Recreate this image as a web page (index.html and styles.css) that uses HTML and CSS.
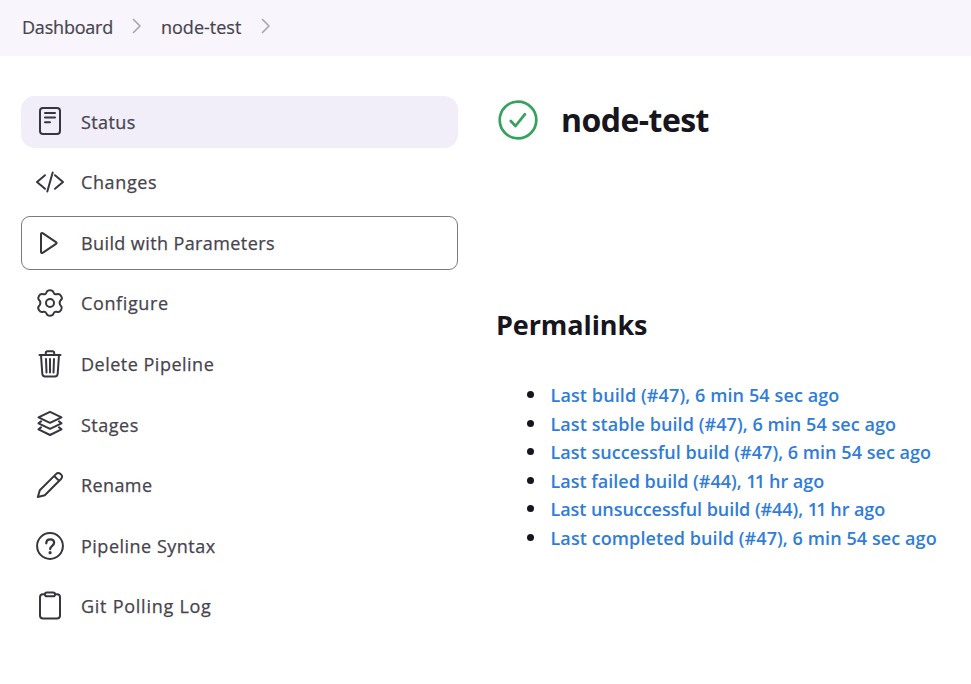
FILE: index.html
```html
<!DOCTYPE html>
<html lang="en">
<head>
<meta charset="utf-8">
<title>node-test</title>
<link rel="stylesheet" href="styles.css">
</head>
<body>
<nav class="breadcrumbs">
  <a class="crumb crumb-home">Dashboard</a>
  <svg class="chevron" viewBox="0 0 10 16"><path d="M1.500 1.500 8 8l-6.500 6.500"/></svg>
  <a class="crumb crumb-job">node-test</a>
  <svg class="chevron" viewBox="0 0 10 16"><path d="M1.500 1.500 8 8l-6.500 6.500"/></svg>
</nav>
<div class="page">
  <aside class="tasks">
    <a class="task active"><svg class="icon" viewBox="0 0 28 28"><rect x="4" y="0" width="20" height="26" rx="3"/><path d="M9 5h10M9 9.500h10M9 14.300h5"/></svg><span class="t-status">Status</span></a>
    <a class="task nudge"><svg class="icon" viewBox="0 0 28 28"><path d="M9 7.200 1 14 9 20.800M19 7.200l8 6.800-8 6.800M16.700 4.500l-5.400 19"/></svg><span class="t-changes">Changes</span></a>
    <a class="task focused"><svg class="icon" viewBox="0 0 28 28"><path d="M5 5v18c0 1 .8 1.300 1.600.8l13.400-8.900c.8-.5.8-1.300 0-1.800L6.600 4.200C5.800 3.700 5 4 5 5z"/></svg><span class="t-build">Build with Parameters</span></a>
    <a class="task nudge"><svg class="icon" viewBox="0 0 28 28"><path d="M10.600 3.300Q11.200 1.300 14 1.300T17.400 3.300Q18.200 5.800 20.600 5.200Q23.300 4.200 24.900 6.700T25.500 10.300Q23.600 12.200 23.600 14T25.500 17.700Q26.300 18.900 24.900 21.300T20.600 22.800Q18.200 22.200 17.400 24.700Q16.800 26.700 14 26.700T10.600 24.700Q9.800 22.200 7.400 22.800Q4.700 23.800 3.100 21.300T2.500 17.700Q4.400 15.800 4.400 14T2.500 10.300Q1.700 9.100 3.100 6.700T7.400 5.200Q9.800 5.800 10.600 3.300Z"/><circle cx="14" cy="14" r="4"/></svg><span class="t-configure">Configure</span></a>
    <a class="task"><svg class="icon" viewBox="0 0 28 28"><path d="M3.500 5h21M5 5l1.300 18.800Q6.500 26.500 9 26.500h10q2.500 0 2.700-2.700L23 5M9.800 5V3q0-1.800 1.800-1.800h4.800Q18.200 1.200 18.200 3v2M10 9l.5 13.500M14 9v13.500M18 9l-.5 13.500"/></svg><span class="t-delete">Delete Pipeline</span></a>
    <a class="task"><svg class="icon" viewBox="0 0 28 28"><path d="M14 .8 25.500 6.300 14 11.800 2.500 6.300zM5 10.400 2.500 12.300 14 17.800 25.500 12.300 23 10.400M5 16.400 2.500 18.300 14 24 25.500 18.300 23 16.400"/></svg><span class="t-stages">Stages</span></a>
    <a class="task"><svg class="icon" viewBox="0 0 28 28"><path d="M1.800 26 3.800 19.300 20 3.100Q22.200.9 24.800 3.200T25 8L8.800 24.200zM18.200 5l4.900 4.900"/></svg><span class="t-rename">Rename</span></a>
    <a class="task"><svg class="icon" viewBox="0 0 28 28"><circle cx="14" cy="14" r="12.900"/><path class="query" d="M10.300 11.300c0-2.600 1.600-4 3.900-4s3.900 1.400 3.900 3.500c0 3-3.900 3.100-3.900 6.200"/><circle class="dot" cx="14.100" cy="20.700" r="1.600"/></svg><span class="t-syntax">Pipeline Syntax</span></a>
    <a class="task"><svg class="icon" viewBox="0 0 28 28"><path d="M9 2.200H7Q4 2.200 4 5.200v18.300Q4 26.500 7 26.500h14q3 0 3-3V5.200q0-3-3-3h-2"/><rect x="9" y=".4" width="10" height="3.800" rx="1.800"/></svg><span class="t-log">Git Polling Log</span></a>
  </aside>
  <main class="content">
    <header class="job">
      <svg class="success" viewBox="0 0 40 40"><circle cx="20" cy="20" r="18.300"/><path d="m12.800 21 4.700 5 9.500-11.800"/></svg>
      <h1>node-test</h1>
    </header>
    <h2>Permalinks</h2>
    <ul class="permalinks">
      <li><a class="l1">Last build (#47), 6 min 54 sec ago</a></li>
      <li><a class="l2">Last stable build (#47), 6 min 54 sec ago</a></li>
      <li><a class="l3">Last successful build (#47), 6 min 54 sec ago</a></li>
      <li><a class="l4">Last failed build (#44), <span class="hours">11</span> hr ago</a></li>
      <li><a class="l5">Last unsuccessful build (#44), <span class="hours">11</span> hr ago</a></li>
      <li><a class="l6">Last completed build (#47), 6 min 54 sec ago</a></li>
    </ul>
  </main>
</div>
</body>
</html>
```
FILE: styles.css
```css
* { box-sizing: border-box; }
body {
  margin: 0;
  background: #fff;
  color: #47444e;
  font-family: "Open Sans", "Noto Sans", sans-serif;
}
svg { flex: none; overflow: visible; fill: none; stroke-linecap: round; stroke-linejoin: round; }
.breadcrumbs {
  display: flex;
  align-items: center;
  height: 56px;
  padding: 0 0 2px 22px;
  background: #f8f5fc;
  font-size: 18px;
  line-height: 24px;
  -webkit-text-stroke: .2px;
}
.crumb-home { width: 110px; letter-spacing: -.2px; }
.crumb-job { width: 81px; margin: 0 19px; }
.crumb { white-space: nowrap; }
.chevron { width: 10px; height: 16px; margin-top: -2px; stroke: #aaa7b1; stroke-width: 1.700; }
.page { display: flex; padding: 40px 0 0 21px; }
.tasks { display: flex; flex-direction: column; gap: 8.500px; width: 437px; }
.task {
  display: flex;
  align-items: center;
  gap: 17px;
  height: 52px;
  padding-left: 15px;
  border-radius: 14px;
  font-size: 18px;
  line-height: 24px;
  font-weight: 500;
  letter-spacing: .4px;
  white-space: nowrap;
  -webkit-text-stroke: .25px;
}
.nudge { margin: -.300px 0 .300px; }
.t-changes, .t-configure { letter-spacing: .62px; }
.t-delete, .t-stages, .t-syntax { letter-spacing: .5px; }
.t-log { letter-spacing: .74px; }
.active { background: #f1edf9; }
.focused {
  height: 54px;
  margin: -1px 0;
  padding-left: 14px;
  border: 1px solid #7c7a80;
  border-radius: 9px;
}
.icon { width: 28px; height: 28px; stroke: #38353e; stroke-width: 2; }
.icon .query { stroke-width: 2.300; }
.icon .dot { fill: #38353e; stroke: none; }
.content { padding-left: 39px; }
.job { display: flex; align-items: center; height: 48px; gap: 24px; }
.success { width: 40px; height: 40px; margin-left: 1px; stroke: #35a25d; stroke-width: 2.700; }
h1, h2 { margin: 0; color: #17151d; font-weight: 700; white-space: nowrap; }
h1 { margin-left: -1px; font-size: 32px; line-height: 44px; letter-spacing: -.55px; }
h2 { margin: 161px 0 0 -1px; font-size: 27px; line-height: 40px; letter-spacing: -.1px; }
.permalinks {
  margin: 36px 0 0;
  padding-left: 50.500px;
  color: #17151d;
  font-size: 18px;
  line-height: 28.500px;
}
.permalinks li { padding-left: 3px; }
.permalinks li::marker { font-size: 20px; }
.permalinks a { color: #2f7dd8; font-weight: 600; white-space: nowrap; }
.hours { letter-spacing: -1.800px; margin-right: 1px; }
.l1 { letter-spacing: .11px; }
.l2 { letter-spacing: .07px; }
.l3 { letter-spacing: .04px; }
.l5 { letter-spacing: -.06px; }
.l6 { letter-spacing: .09px; }
```
